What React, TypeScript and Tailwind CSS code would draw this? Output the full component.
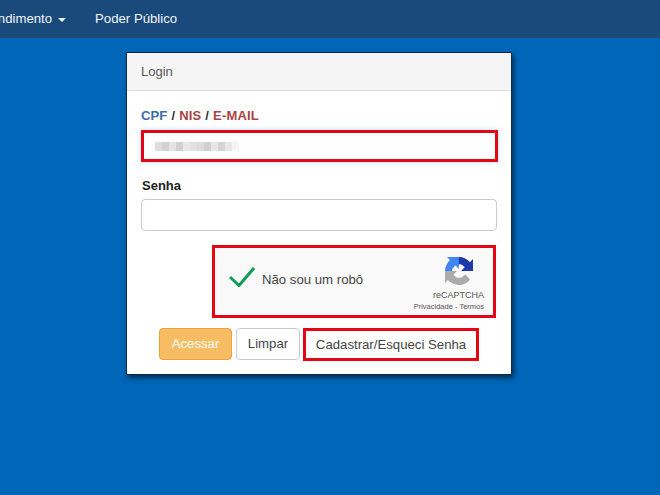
import React from 'react';

const blurCells = ['bg-[#ddd]', 'bg-[#d2d2d2]', 'bg-[#e4e4e4]', 'bg-[#d0d0d0]', 'bg-[#e8e8e8]', 'bg-[#e2e2e2]', 'bg-[#dcdcdc]', 'bg-[#d0d0d0]', 'bg-[#e6e6e6]', 'bg-[#d4d4d4]', 'bg-[#e6e6e6]', 'bg-[#f4f4f4]'];

const RecaptchaLogo: React.FC = () => (
  <svg viewBox="0 0 64 64" className="h-[28px] w-[28px]">
    <path fill="#1c3aa9" d="M64 31.955l-.033-1.37V4.687l-7.16 7.16C50.948 4.674 42.033.093 32.05.093c-10.4 0-19.622 4.96-25.458 12.64l11.736 11.86a15.55 15.55 0 0 1 4.754-5.334c2.05-1.6 4.952-2.906 8.968-2.906.485 0 .86.057 1.135.163 4.976.393 9.288 3.14 11.828 7.124l-8.307 8.307c10.522-.04 22.4-.066 26.295.005" />
    <path fill="#4285f4" d="M31.862.094l-1.37.033H4.594l7.16 7.16C4.58 13.147 0 22.06 0 32.046c0 10.4 4.96 19.622 12.64 25.458L24.5 45.768a15.55 15.55 0 0 1-5.334-4.754c-1.6-2.05-2.906-4.952-2.906-8.968 0-.485.057-.86.163-1.135.393-4.976 3.14-9.288 7.124-11.828l8.307 8.307c-.04-10.522-.066-22.4.005-26.295" />
    <path fill="#ababab" d="M.001 32.045l.033 1.37v25.898l7.16-7.16c5.86 7.173 14.774 11.754 24.76 11.754 10.4 0 19.622-4.96 25.458-12.64l-11.736-11.86a15.55 15.55 0 0 1-4.754 5.334c-2.05 1.6-4.952 2.906-8.968 2.906-.485 0-.86-.057-1.135-.163-4.976-.393-9.288-3.14-11.828-7.124l8.307-8.307c-10.522.04-22.4.066-26.295-.005" />
  </svg>
);

const App: React.FC = () => {
  return (
    <div className="h-[495px] w-[660px] overflow-hidden bg-[#0066b8] font-['Liberation_Sans',Arial,sans-serif]">
      {/* Navbar */}
      <nav className="flex h-[38px] items-center bg-[#1a4a7c] text-[13.2px] text-[#f2f5f8]">
        <span className="ml-[-22px] flex items-center">
          Atendimento
          <span className="ml-[6px] mt-[2px] h-0 w-0 border-x-4 border-t-4 border-x-transparent border-t-[#f2f5f8]" />
        </span>
        <span className="ml-[29px]">Poder Público</span>
      </nav>

      {/* Login card */}
      <div className="ml-[126px] mt-[14px] h-[323px] w-[386px] border border-[#0b2a4d] bg-white shadow-[2px_3px_5px_rgba(0,0,0,0.55)]">
        <div className="flex h-[38px] items-center border-b border-[#ddd] bg-[#f5f5f5] px-[14px] text-[13px] text-[#555]">
          Login
        </div>

        <div className="px-[14px] pt-[16px]">
          <label className="flex h-[17px] items-center gap-[4px] text-[13px] font-bold tracking-[0.15px] text-[#333]">
            <span className="text-[#3a6ea5]">CPF</span> / <span className="text-[#a94442]">NIS</span> / <span className="text-[#a94442]">E-MAIL</span>
          </label>
          <div className="mt-[6px] flex h-[32px] w-[357px] items-center border-[3px] border-[#e30613] bg-white pl-[11px] shadow-[0_0_5px_rgba(102,175,233,0.45)]">
            <div className="flex h-[11px] items-center">
              {blurCells.map((c, i) => (
                <div key={i} className={`h-[9px] w-[7px] ${c}`} />
              ))}
            </div>
          </div>

          <label className="mt-[16px] block pl-px text-[13px] font-bold leading-[15px] text-[#222]">Senha</label>
          <div className="mt-[6px] h-[32px] w-[356px] rounded-[4px] border border-[#ccc] bg-white" />

          {/* reCAPTCHA */}
          <div className="ml-[71px] mt-[14px] flex h-[73px] w-[284px] items-center justify-between border-[3px] border-[#e30613] bg-[#f9f9f9] pl-[14px] pr-[9px]">
            <div className="mb-[3px] flex items-center">
              <svg viewBox="0 0 26 20" className="mb-[6px] h-[20px] w-[26px]">
                <path d="M1 10 L10 18.5 L25 1" fill="none" stroke="#0f9d58" strokeWidth="3" />
              </svg>
              <span className="ml-[7px] text-[13.2px] text-[#444]">Não sou um robô</span>
            </div>
            <div className="flex flex-col items-end self-start pt-[9px]">
              <div className="mr-[11px]">
                <RecaptchaLogo />
              </div>
              <span className="mt-[4px] text-[9px] leading-[12px] text-[#555]">reCAPTCHA</span>
              <span className="mt-px text-[7.5px] leading-[10px] text-[#555]">Privacidade - Termos</span>
            </div>
          </div>

          {/* Actions */}
          <div className="mt-[10px] flex items-start justify-center gap-[4px] text-[13.2px]">
            <button className="h-[32px] w-[73px] rounded-[4px] border border-[#eea236] bg-[#f6bd63] text-white">Acessar</button>
            <button className="h-[32px] w-[64px] rounded-[4px] border border-[#ccc] bg-white text-[#444]">Limpar</button>
            <button className="ml-[-1px] h-[33px] w-[176px] border-[3px] border-[#e30613] bg-white text-[#444]">Cadastrar/Esqueci Senha</button>
          </div>
        </div>
      </div>
    </div>
  );
};

export default App;
